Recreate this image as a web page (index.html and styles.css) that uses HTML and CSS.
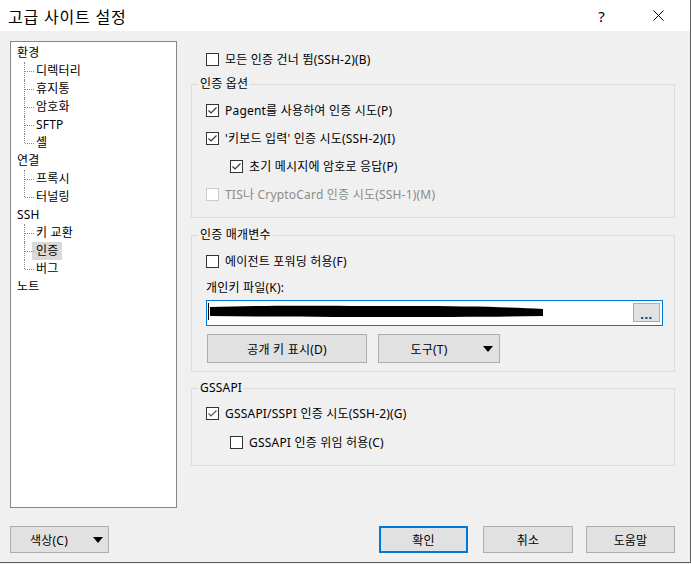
FILE: index.html
```html
<!DOCTYPE html>
<html lang="ko">

<head>
    <meta charset="UTF-8">
    <meta name="viewport" content="width=device-width, initial-scale=1.0">
    <title>고급 사이트 설정</title>
    <link rel="stylesheet" href="styles.css">
</head>

<body>
    <div class="window">
        <div class="titlebar">
            <span class="title">고급 사이트 설정</span>
            <span class="help">?</span>
            <svg class="close" width="11" height="11" viewBox="0 0 11 11">
                <path d="M0.5 0.5 L10.5 10.5 M10.5 0.5 L0.5 10.5" stroke="#000" stroke-width="1" fill="none"/>
            </svg>
        </div>

        <div class="main">
            <ul class="tree">
                <li class="node">환경
                    <ul class="children">
                        <li>디렉터리</li>
                        <li>휴지통</li>
                        <li>암호화</li>
                        <li>SFTP</li>
                        <li>셸</li>
                    </ul>
                </li>
                <li class="node">연결
                    <ul class="children">
                        <li>프록시</li>
                        <li>터널링</li>
                    </ul>
                </li>
                <li class="node">SSH
                    <ul class="children">
                        <li>키 교환</li>
                        <li><span class="sel">인증</span></li>
                        <li>버그</li>
                    </ul>
                </li>
                <li class="node">노트</li>
            </ul>

            <div class="panel">
                <label class="check">
                    <span class="box"></span>모든 인증 건너 뜀(SSH-2)(B)
                </label>

                <fieldset class="group first">
                    <legend>인증 옵션</legend>
                    <label class="check">
                        <span class="box"><svg viewBox="0 0 11 11"><path d="M1.5 5.5 L4 8 L9.5 2.5"/></svg></span>Pagent를 사용하여 인증 시도(P)
                    </label>
                    <label class="check">
                        <span class="box"><svg viewBox="0 0 11 11"><path d="M1.5 5.5 L4 8 L9.5 2.5"/></svg></span>'키보드 입력' 인증 시도(SSH-2)(I)
                    </label>
                    <label class="check sub">
                        <span class="box"><svg viewBox="0 0 11 11"><path d="M1.5 5.5 L4 8 L9.5 2.5"/></svg></span>초기 메시지에 암호로 응답(P)
                    </label>
                    <label class="check disabled">
                        <span class="box"></span>TIS나 CryptoCard 인증 시도(SSH-1)(M)
                    </label>
                </fieldset>

                <fieldset class="group params">
                    <legend>인증 매개변수</legend>
                    <label class="check">
                        <span class="box"></span>에이전트 포워딩 허용(F)
                    </label>
                    <div class="field-label">개인키 파일(K):</div>
                    <div class="path">
                        <svg class="redact" width="340" height="24" viewBox="0 0 340 24">
                            <path d="M3 6 C60 4 120 5 200 5 C260 5 300 6 336 8 L336 15 C290 16 240 16 180 16 C110 16 60 16 3 15 Z" fill="#000"/>
                            <rect x="1" y="2" width="1" height="17" fill="#000"/>
                        </svg>
                        <button class="browse">...</button>
                    </div>
                    <div class="actions">
                        <button class="btn show-key">공개 키 표시(D)</button>
                        <button class="btn drop tools"><span>도구(T)</span><svg width="10" height="6" viewBox="0 0 10 6"><path d="M0 0 L10 0 L5 6 Z" fill="#000"/></svg></button>
                    </div>
                </fieldset>

                <fieldset class="group gss">
                    <legend>GSSAPI</legend>
                    <label class="check light">
                        <span class="box"><svg viewBox="0 0 11 11"><path d="M1.5 5.5 L4 8 L9.5 2.5"/></svg></span>GSSAPI/SSPI 인증 시도(SSH-2)(G)
                    </label>
                    <label class="check sub second">
                        <span class="box"></span>GSSAPI 인증 위임 허용(C)
                    </label>
                </fieldset>
            </div>
        </div>

        <div class="footer">
            <button class="btn drop colors"><span>색상(C)</span><svg width="10" height="6" viewBox="0 0 10 6"><path d="M0 0 L10 0 L5 6 Z" fill="#000"/></svg></button>
            <button class="btn ok">확인</button>
            <button class="btn cancel">취소</button>
            <button class="btn help-btn">도움말</button>
        </div>
    </div>
</body>

</html>
```

FILE: styles.css
```css
html {
    background-color: #f0f0f0;
}

body {
    margin: 0;
    padding: 0;
    font-family: "Noto Sans", "Noto Sans CJK KR", sans-serif;
    font-size: 12px;
    letter-spacing: 0.2px;
    color: #000;
}

.window {
    width: 691px;
    height: 563px;
    box-sizing: border-box;
    background-color: #f0f0f0;
    border-right: 1px solid #5c5c5c;
    border-bottom: 1px solid #5c5c5c;
}

.titlebar {
    height: 31px;
    background-color: #fff;
    display: flex;
    align-items: center;
}

.title {
    padding-left: 8px;
    font-size: 16px;
    letter-spacing: 0.8px;
}

.help {
    margin-left: auto;
    font-size: 15px;
}

.close {
    margin-left: 48px;
    margin-right: 26px;
}

.main {
    display: flex;
    padding: 10px 0 0 10px;
}

/* tree */

.tree {
    list-style: none;
    margin: 0;
    padding: 2px 0 0 6px;
    width: 167px;
    height: 467px;
    box-sizing: border-box;
    border: 1px solid #828790;
    background-color: #fff;
}

.tree li {
    line-height: 18px;
}

.children {
    list-style: none;
    margin: 0;
    padding: 0 0 0 19px;
}

.children li {
    position: relative;
    height: 18px;
}

.children li::before {
    content: "";
    position: absolute;
    left: -12px;
    top: 0;
    height: 18px;
    border-left: 1px dotted #8a8a8a;
}

.children li:last-child::before {
    height: 9px;
}

.children li::after {
    content: "";
    position: absolute;
    left: -11px;
    top: 9px;
    width: 9px;
    border-top: 1px dotted #8a8a8a;
}

.sel {
    display: inline-block;
    background-color: #d9d9d9;
    margin-left: -4px;
    padding: 0 4px;
    height: 18px;
}

/* right panel */

.panel {
    width: 484px;
    margin-left: 14px;
    padding-top: 4px;
}

.panel > .check {
    padding-left: 15px;
}

.check {
    display: flex;
    align-items: center;
    height: 28px;
}

.check.sub {
    padding-left: 24px;
}

.box {
    width: 13px;
    height: 13px;
    box-sizing: border-box;
    border: 1px solid #333;
    background-color: #fff;
    margin-right: 6px;
    flex-shrink: 0;
}

.box svg {
    display: block;
    width: 11px;
    height: 11px;
}

.box path {
    fill: none;
    stroke: #333;
    stroke-width: 1.2;
}

.check.light .box path {
    stroke: #5a5a5a;
}

.check.disabled {
    color: #8b8b8b;
}

.check.disabled .box {
    border-color: #cccccc;
}

.group {
    margin: 0;
    border: 1px solid #dcdcdc;
    padding: 4px 9px 9px 14px;
}

.group legend {
    padding: 0 2px;
    margin-left: -8px;
    line-height: 16px;
}

.group.first {
    margin-top: 3px;
}

.group.params {
    margin-top: 9px;
    padding-bottom: 8px;
}

.group.gss {
    margin-top: 8px;
    padding-top: 3px;
    padding-bottom: 9px;
}

.check.second {
    margin-top: 1px;
}

.field-label {
    margin-top: 5px;
    line-height: 16px;
}

.path {
    margin-top: 4px;
    width: 457px;
    height: 26px;
    box-sizing: border-box;
    border: 1px solid #0078d7;
    background-color: #fff;
    display: flex;
}

.redact {
    display: block;
}

.browse {
    margin: 2px 2px 0 auto;
    width: 27px;
    height: 19px;
    box-sizing: border-box;
    border: 1px solid #adadad;
    background-color: #e1e1e1;
    font-family: "Noto Sans", sans-serif;
    font-size: 13px;
    font-weight: bold;
    letter-spacing: 0.5px;
    line-height: 12px;
    padding: 3px 0 0 0;
    color: #10365c;
}

.actions {
    display: flex;
    margin-top: 8px;
    padding-left: 1px;
}

.btn {
    height: 29px;
    box-sizing: border-box;
    border: 1px solid #adadad;
    background-color: #e1e1e1;
    font-family: "Noto Sans", "Noto Sans CJK KR", sans-serif;
    font-size: 12px;
    letter-spacing: 0.2px;
    color: #000;
    padding: 0;
}

.btn.drop {
    display: flex;
    align-items: center;
}

.btn.drop span {
    flex: 1;
    text-align: center;
}

.show-key {
    width: 160px;
}

.tools {
    width: 122px;
    margin-left: 11px;
    padding-right: 6px;
}

.tools svg {
    margin-left: 4px;
}

/* footer */

.footer {
    display: flex;
    margin-top: 18px;
    padding-left: 10px;
}

.footer .btn {
    height: 27px;
}

.colors {
    width: 99px;
    padding-right: 5px;
}

.colors svg {
    margin-left: 6px;
}

.ok {
    width: 89px;
    margin-left: 270px;
    border: 2px solid #0078d7;
}

.cancel {
    width: 90px;
    margin-left: 15px;
}

.help-btn {
    width: 89px;
    margin-left: 13px;
}
```
